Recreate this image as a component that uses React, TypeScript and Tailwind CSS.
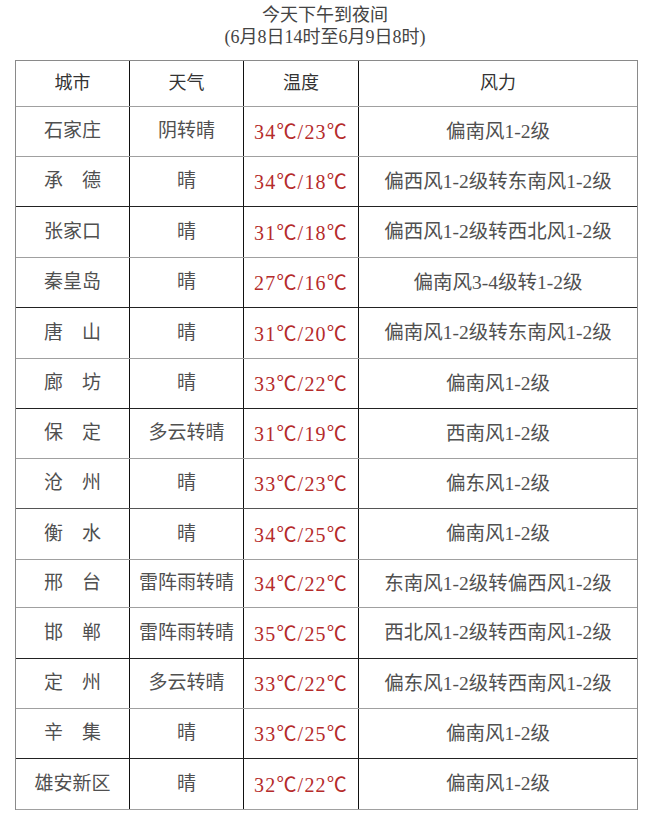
import React from 'react';

type Row = { city: string; weather: string; temp: string; wind: string; h: string; line: string };

const rows: Row[] = [
    { city: '石家庄', weather: '阴转晴', temp: '34/23', wind: '偏南风1-2级', h: 'h-[50px]', line: 'border-[#a0a0a0]' },
    { city: '承　德', weather: '晴', temp: '34/18', wind: '偏西风1-2级转东南风1-2级', h: 'h-[50px]', line: 'border-[#222]' },
    { city: '张家口', weather: '晴', temp: '31/18', wind: '偏西风1-2级转西北风1-2级', h: 'h-[51px]', line: 'border-[#a0a0a0]' },
    { city: '秦皇岛', weather: '晴', temp: '27/16', wind: '偏南风3-4级转1-2级', h: 'h-[50px]', line: 'border-[#222]' },
    { city: '唐　山', weather: '晴', temp: '31/20', wind: '偏南风1-2级转东南风1-2级', h: 'h-[51px]', line: 'border-[#a0a0a0]' },
    { city: '廊　坊', weather: '晴', temp: '33/22', wind: '偏南风1-2级', h: 'h-[50px]', line: 'border-[#222]' },
    { city: '保　定', weather: '多云转晴', temp: '31/19', wind: '西南风1-2级', h: 'h-[50px]', line: 'border-[#a0a0a0]' },
    { city: '沧　州', weather: '晴', temp: '33/23', wind: '偏东风1-2级', h: 'h-[50px]', line: 'border-[#555]' },
    { city: '衡　水', weather: '晴', temp: '34/25', wind: '偏南风1-2级', h: 'h-[51px]', line: 'border-[#a0a0a0]' },
    { city: '邢　台', weather: '雷阵雨转晴', temp: '34/22', wind: '东南风1-2级转偏西风1-2级', h: 'h-[48px]', line: 'border-[#a0a0a0]' },
    { city: '邯　郸', weather: '雷阵雨转晴', temp: '35/25', wind: '西北风1-2级转西南风1-2级', h: 'h-[51px]', line: 'border-[#222]' },
    { city: '定　州', weather: '多云转晴', temp: '33/22', wind: '偏东风1-2级转西南风1-2级', h: 'h-[50px]', line: 'border-[#a0a0a0]' },
    { city: '辛　集', weather: '晴', temp: '33/25', wind: '偏南风1-2级', h: 'h-[50px]', line: 'border-[#222]' },
    { city: '雄安新区', weather: '晴', temp: '32/22', wind: '偏南风1-2级', h: 'h-[51px]', line: 'border-[#a0a0a0]' },
];

const font = { fontFamily: '"Liberation Serif", "Noto Sans CJK SC", serif' };

function Temp({ value }: { value: string }) {
    const [hi, lo] = value.split('/');
    return (
        <span>
            {hi}
            <span className="font-['Noto_Sans_CJK_SC']">℃</span>/{lo}
            <span className="font-['Noto_Sans_CJK_SC']">℃</span>
        </span>
    );
}

export default function App() {
    return (
        <div className="w-[650px] h-[840px] bg-white text-[#505050]" style={font}>
            <div className="pt-[4px] text-center text-[18px] leading-[22px] text-[#444]">
                <div>今天下午到夜间</div>
                <div>(6月8日14时至6月9日8时)</div>
            </div>

            <div className="mt-[12px] ml-[15px] w-[623px] border-t border-l border-r border-[#8a8a8a]">
                <div className="flex h-[46px] border-b border-[#a0a0a0] text-[18px] text-[#333]">
                    <div className="w-[114px] flex items-center justify-center border-r border-[#111]">城市</div>
                    <div className="w-[114px] flex items-center justify-center border-r border-[#111]">天气</div>
                    <div className="w-[115px] flex items-center justify-center border-r border-[#111]">温度</div>
                    <div className="flex-1 flex items-center justify-center">风力</div>
                </div>

                {rows.map((r) => (
                    <div key={r.city} className={`flex border-b text-[19px] ${r.h} ${r.line}`}>
                        <div className="w-[114px] flex items-center justify-center border-r border-[#111] whitespace-pre">
                            {r.city}
                        </div>
                        <div className="w-[114px] flex items-center justify-center border-r border-[#111]">
                            {r.weather}
                        </div>
                        <div className="w-[115px] flex items-center justify-center border-r border-[#111] text-[20px] text-[#b52b2b] tracking-[1.2px]">
                            <Temp value={r.temp} />
                        </div>
                        <div className="flex-1 flex items-center justify-center text-[19.5px]">{r.wind}</div>
                    </div>
                ))}
            </div>
        </div>
    );
}
